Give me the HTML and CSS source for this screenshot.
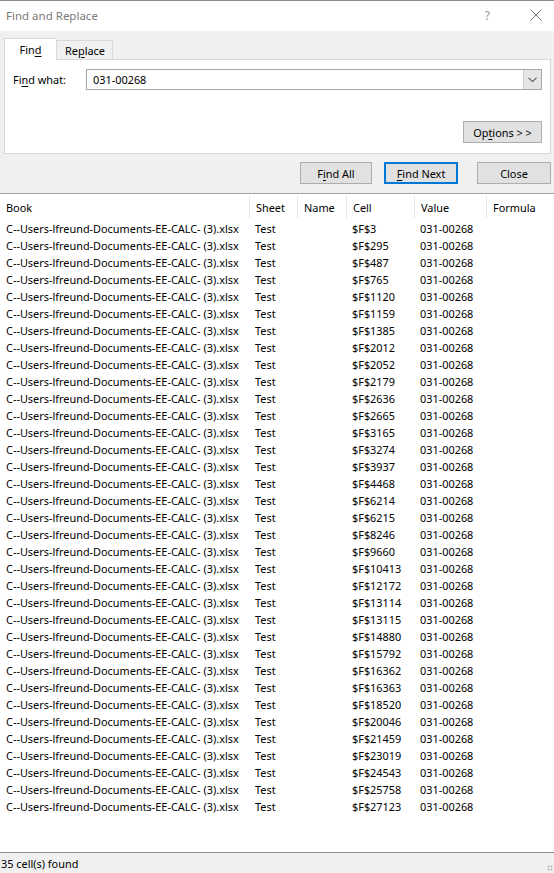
FILE: index.html
```html
<!DOCTYPE html>
<html>
<head>
<meta charset="utf-8">
<link rel="stylesheet" href="styles.css">
</head>
<body>
<div class="window">
  <div class="titlebar">
    <span class="title">Find and Replace</span>
    <span class="help">?</span>
    <svg class="x" width="12" height="12" viewBox="0 0 12 12"><path d="M0.5 0.5 L11.5 11.5 M11.5 0.5 L0.5 11.5" stroke="#7a7a7a" stroke-width="1" fill="none"/></svg>
  </div>
  <div class="dlg">
    <div class="tabs">
      <div class="tab active">Fin<u>d</u></div>
      <div class="tab">Re<u>p</u>lace</div>
    </div>
    <div class="panel">
      <div class="findrow">
        <span class="label">Fi<u>n</u>d what:</span>
        <div class="combo">
          <span class="val">031-00268</span>
          <div class="drop"><svg width="9" height="6" viewBox="0 0 9 6"><path d="M0.5 0.8 L4.5 4.6 L8.5 0.8" stroke="#505050" stroke-width="1.1" fill="none"/></svg></div>
        </div>
      </div>
      <div class="optrow"><div class="btn opt">Op<u>t</u>ions &gt; &gt;</div></div>
    </div>
    <div class="actions">
      <div class="btn fa">F<u>i</u>nd All</div>
      <div class="btn fn"><u>F</u>ind Next</div>
      <div class="btn cl">Close</div>
    </div>
  </div>
  <div class="results">
    <div class="row head"><span class="c">Book</span><span class="c">Sheet</span><span class="c">Name</span><span class="c">Cell</span><span class="c">Value</span><span class="c">Formula</span></div>
    <div class="row"><span class="c">C--Users-lfreund-Documents-EE-CALC- (3).xlsx</span><span class="c">Test</span><span class="c"></span><span class="c">$F$3</span><span class="c">031-00268</span><span class="c"></span></div>
    <div class="row"><span class="c">C--Users-lfreund-Documents-EE-CALC- (3).xlsx</span><span class="c">Test</span><span class="c"></span><span class="c">$F$295</span><span class="c">031-00268</span><span class="c"></span></div>
    <div class="row"><span class="c">C--Users-lfreund-Documents-EE-CALC- (3).xlsx</span><span class="c">Test</span><span class="c"></span><span class="c">$F$487</span><span class="c">031-00268</span><span class="c"></span></div>
    <div class="row"><span class="c">C--Users-lfreund-Documents-EE-CALC- (3).xlsx</span><span class="c">Test</span><span class="c"></span><span class="c">$F$765</span><span class="c">031-00268</span><span class="c"></span></div>
    <div class="row"><span class="c">C--Users-lfreund-Documents-EE-CALC- (3).xlsx</span><span class="c">Test</span><span class="c"></span><span class="c">$F$1120</span><span class="c">031-00268</span><span class="c"></span></div>
    <div class="row"><span class="c">C--Users-lfreund-Documents-EE-CALC- (3).xlsx</span><span class="c">Test</span><span class="c"></span><span class="c">$F$1159</span><span class="c">031-00268</span><span class="c"></span></div>
    <div class="row"><span class="c">C--Users-lfreund-Documents-EE-CALC- (3).xlsx</span><span class="c">Test</span><span class="c"></span><span class="c">$F$1385</span><span class="c">031-00268</span><span class="c"></span></div>
    <div class="row"><span class="c">C--Users-lfreund-Documents-EE-CALC- (3).xlsx</span><span class="c">Test</span><span class="c"></span><span class="c">$F$2012</span><span class="c">031-00268</span><span class="c"></span></div>
    <div class="row"><span class="c">C--Users-lfreund-Documents-EE-CALC- (3).xlsx</span><span class="c">Test</span><span class="c"></span><span class="c">$F$2052</span><span class="c">031-00268</span><span class="c"></span></div>
    <div class="row"><span class="c">C--Users-lfreund-Documents-EE-CALC- (3).xlsx</span><span class="c">Test</span><span class="c"></span><span class="c">$F$2179</span><span class="c">031-00268</span><span class="c"></span></div>
    <div class="row"><span class="c">C--Users-lfreund-Documents-EE-CALC- (3).xlsx</span><span class="c">Test</span><span class="c"></span><span class="c">$F$2636</span><span class="c">031-00268</span><span class="c"></span></div>
    <div class="row"><span class="c">C--Users-lfreund-Documents-EE-CALC- (3).xlsx</span><span class="c">Test</span><span class="c"></span><span class="c">$F$2665</span><span class="c">031-00268</span><span class="c"></span></div>
    <div class="row"><span class="c">C--Users-lfreund-Documents-EE-CALC- (3).xlsx</span><span class="c">Test</span><span class="c"></span><span class="c">$F$3165</span><span class="c">031-00268</span><span class="c"></span></div>
    <div class="row"><span class="c">C--Users-lfreund-Documents-EE-CALC- (3).xlsx</span><span class="c">Test</span><span class="c"></span><span class="c">$F$3274</span><span class="c">031-00268</span><span class="c"></span></div>
    <div class="row"><span class="c">C--Users-lfreund-Documents-EE-CALC- (3).xlsx</span><span class="c">Test</span><span class="c"></span><span class="c">$F$3937</span><span class="c">031-00268</span><span class="c"></span></div>
    <div class="row"><span class="c">C--Users-lfreund-Documents-EE-CALC- (3).xlsx</span><span class="c">Test</span><span class="c"></span><span class="c">$F$4468</span><span class="c">031-00268</span><span class="c"></span></div>
    <div class="row"><span class="c">C--Users-lfreund-Documents-EE-CALC- (3).xlsx</span><span class="c">Test</span><span class="c"></span><span class="c">$F$6214</span><span class="c">031-00268</span><span class="c"></span></div>
    <div class="row"><span class="c">C--Users-lfreund-Documents-EE-CALC- (3).xlsx</span><span class="c">Test</span><span class="c"></span><span class="c">$F$6215</span><span class="c">031-00268</span><span class="c"></span></div>
    <div class="row"><span class="c">C--Users-lfreund-Documents-EE-CALC- (3).xlsx</span><span class="c">Test</span><span class="c"></span><span class="c">$F$8246</span><span class="c">031-00268</span><span class="c"></span></div>
    <div class="row"><span class="c">C--Users-lfreund-Documents-EE-CALC- (3).xlsx</span><span class="c">Test</span><span class="c"></span><span class="c">$F$9660</span><span class="c">031-00268</span><span class="c"></span></div>
    <div class="row"><span class="c">C--Users-lfreund-Documents-EE-CALC- (3).xlsx</span><span class="c">Test</span><span class="c"></span><span class="c">$F$10413</span><span class="c">031-00268</span><span class="c"></span></div>
    <div class="row"><span class="c">C--Users-lfreund-Documents-EE-CALC- (3).xlsx</span><span class="c">Test</span><span class="c"></span><span class="c">$F$12172</span><span class="c">031-00268</span><span class="c"></span></div>
    <div class="row"><span class="c">C--Users-lfreund-Documents-EE-CALC- (3).xlsx</span><span class="c">Test</span><span class="c"></span><span class="c">$F$13114</span><span class="c">031-00268</span><span class="c"></span></div>
    <div class="row"><span class="c">C--Users-lfreund-Documents-EE-CALC- (3).xlsx</span><span class="c">Test</span><span class="c"></span><span class="c">$F$13115</span><span class="c">031-00268</span><span class="c"></span></div>
    <div class="row"><span class="c">C--Users-lfreund-Documents-EE-CALC- (3).xlsx</span><span class="c">Test</span><span class="c"></span><span class="c">$F$14880</span><span class="c">031-00268</span><span class="c"></span></div>
    <div class="row"><span class="c">C--Users-lfreund-Documents-EE-CALC- (3).xlsx</span><span class="c">Test</span><span class="c"></span><span class="c">$F$15792</span><span class="c">031-00268</span><span class="c"></span></div>
    <div class="row"><span class="c">C--Users-lfreund-Documents-EE-CALC- (3).xlsx</span><span class="c">Test</span><span class="c"></span><span class="c">$F$16362</span><span class="c">031-00268</span><span class="c"></span></div>
    <div class="row"><span class="c">C--Users-lfreund-Documents-EE-CALC- (3).xlsx</span><span class="c">Test</span><span class="c"></span><span class="c">$F$16363</span><span class="c">031-00268</span><span class="c"></span></div>
    <div class="row"><span class="c">C--Users-lfreund-Documents-EE-CALC- (3).xlsx</span><span class="c">Test</span><span class="c"></span><span class="c">$F$18520</span><span class="c">031-00268</span><span class="c"></span></div>
    <div class="row"><span class="c">C--Users-lfreund-Documents-EE-CALC- (3).xlsx</span><span class="c">Test</span><span class="c"></span><span class="c">$F$20046</span><span class="c">031-00268</span><span class="c"></span></div>
    <div class="row"><span class="c">C--Users-lfreund-Documents-EE-CALC- (3).xlsx</span><span class="c">Test</span><span class="c"></span><span class="c">$F$21459</span><span class="c">031-00268</span><span class="c"></span></div>
    <div class="row"><span class="c">C--Users-lfreund-Documents-EE-CALC- (3).xlsx</span><span class="c">Test</span><span class="c"></span><span class="c">$F$23019</span><span class="c">031-00268</span><span class="c"></span></div>
    <div class="row"><span class="c">C--Users-lfreund-Documents-EE-CALC- (3).xlsx</span><span class="c">Test</span><span class="c"></span><span class="c">$F$24543</span><span class="c">031-00268</span><span class="c"></span></div>
    <div class="row"><span class="c">C--Users-lfreund-Documents-EE-CALC- (3).xlsx</span><span class="c">Test</span><span class="c"></span><span class="c">$F$25758</span><span class="c">031-00268</span><span class="c"></span></div>
    <div class="row"><span class="c">C--Users-lfreund-Documents-EE-CALC- (3).xlsx</span><span class="c">Test</span><span class="c"></span><span class="c">$F$27123</span><span class="c">031-00268</span><span class="c"></span></div>
  </div>
  <div class="status">35 cell(s) found<span class="grip"></span></div>
</div>
</body>
</html>
```

FILE: styles.css
```css
* { box-sizing: border-box; }
html, body { margin: 0; padding: 0; }
body {
  width: 554px;
  height: 873px;
  overflow: hidden;
  font-family: "Noto Sans", "Open Sans", sans-serif;
  font-size: 10.9px;
  color: #000;
  background: #fff;
}
u { text-decoration: underline; text-underline-offset: 2px; }
.window {
  width: 554px;
  height: 873px;
  display: flex;
  flex-direction: column;
  border-top: 1px solid #8c8c8c;
}
.titlebar {
  height: 30px;
  flex: none;
  background: #fff;
  display: flex;
  align-items: center;
  padding-left: 6px;
  padding-bottom: 2px;
}
.title { color: #7a7a7a; font-size: 11.5px; flex: 1; }
.help { color: #9a9a9a; font-size: 12px; margin-right: 40px; }
.x { margin-right: 12px; }
.dlg {
  flex: none;
  height: 163px;
  background: #f0f0f0;
  padding: 7px 3px 0 4px;
  border-bottom: 1px solid #a0a0a0;
}
.tabs { display: flex; align-items: flex-end; height: 21px; }
.tab {
  height: 19px;
  padding: 0 8px;
  border: 1px solid #d9d9d9;
  border-bottom: none;
  background: #f0f0f0;
  display: flex;
  align-items: center;
  width: 57px;
}
.tab.active {
  height: 22px;
  width: 52px;
  background: #fff;
  margin-bottom: -1px;
  position: relative;
  z-index: 1;
  justify-content: center;
  padding: 0;
  border-right: none;
}
.panel {
  height: 95px;
  background: #fff;
  border: 1px solid #d9d9d9;
  padding: 9px 8px 0 8px;
}
.findrow { display: flex; align-items: center; height: 21px; }
.label { width: 73px; }
.combo {
  flex: 1;
  height: 21px;
  border: 1px solid #a6a6a6;
  display: flex;
  align-items: center;
  padding-left: 6px;
}
.val { flex: 1; }
.drop {
  width: 18px;
  height: 19px;
  background: #e5e5e5;
  border-left: 1px solid #cfcfcf;
  display: flex;
  align-items: center;
  justify-content: center;
}
.optrow { display: flex; justify-content: flex-end; margin-top: 31px; }
.btn {
  height: 22px;
  background: #e1e1e1;
  border: 1px solid #adadad;
  display: flex;
  align-items: center;
  justify-content: center;
}
.opt { width: 79px; }
.actions {
  display: flex;
  justify-content: flex-end;
  margin-top: 8px;
}
.fa { width: 72px; }
.fn { width: 74px; margin-left: 12px; border: 2px solid #0078d7; }
.cl { width: 74px; margin-left: 19px; }
.results {
  flex: 1;
  background: #fff;
}
.row {
  display: grid;
  grid-template-columns: 249px 48px 49px 68px 72px 68px;
  height: 17px;
  align-items: center;
}
.row .c { padding-left: 6px; white-space: nowrap; overflow: hidden; }
.row.head { height: 26px; }
.row.head .c {
  border-left: 1px solid #e5e5e5;
  height: 22px;
  display: flex;
  align-items: center;
}
.row.head .c:first-child { border-left: none; }
.status {
  flex: none;
  height: 21px;
  background: #f0f0f0;
  border-top: 1px solid #8c8c8c;
  display: flex;
  align-items: center;
  padding-left: 1px;
  position: relative;
}
.grip {
  position: absolute;
  right: 1px;
  bottom: 2px;
  width: 6px;
  height: 6px;
  background:
    radial-gradient(circle, #b5b5b5 0.9px, transparent 1.1px) 0 0 / 3px 3px;
}
```
